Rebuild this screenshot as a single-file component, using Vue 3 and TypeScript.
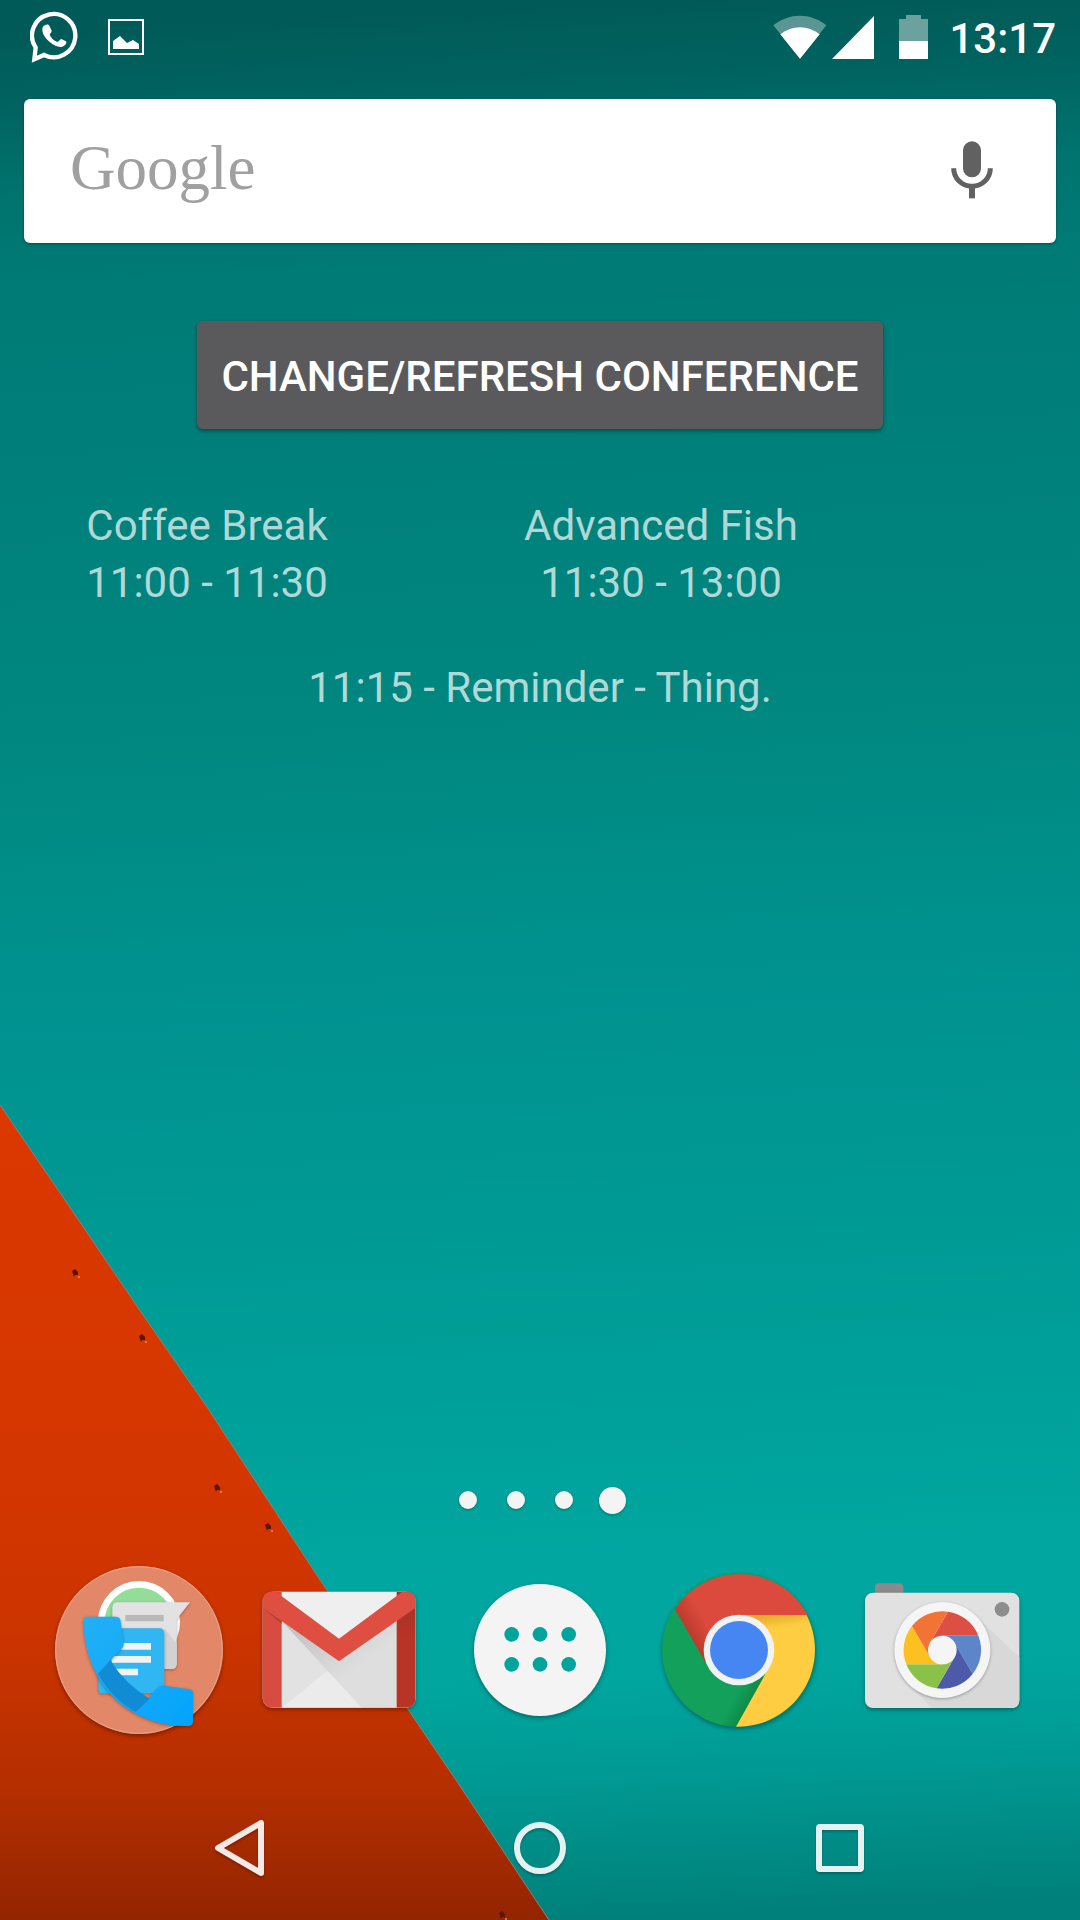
<script setup lang="ts">
interface Session {
  title: string
  time: string
}

const clock = '13:17'
const sessions: Session[] = [
  { title: 'Coffee Break', time: '11:00 - 11:30' },
  { title: 'Advanced Fish', time: '11:30 - 13:00' },
]
const reminder = '11:15 - Reminder - Thing.'
const pages = [1, 2, 3, 4]
const currentPage = 4
const rivets = [
  [75, 1273],
  [142, 1338],
  [217, 1488],
  [268, 1527],
  [502, 1915],
]
</script>

<template>
  <div class="home">
    <svg class="wallpaper" viewBox="0 0 1080 1920" preserveAspectRatio="none" aria-hidden="true">
      <defs>
        <linearGradient id="sea" gradientUnits="userSpaceOnUse" x1="500" y1="0" x2="580" y2="1920">
          <stop offset="0" stop-color="#005a57" />
          <stop offset="0.04" stop-color="#00625f" />
          <stop offset="0.09" stop-color="#00736e" />
          <stop offset="0.14" stop-color="#007b76" />
          <stop offset="0.24" stop-color="#00807b" />
          <stop offset="0.37" stop-color="#008780" />
          <stop offset="0.46" stop-color="#008f89" />
          <stop offset="0.5" stop-color="#00918f" />
          <stop offset="0.63" stop-color="#009994" />
          <stop offset="0.73" stop-color="#00a09a" />
          <stop offset="0.82" stop-color="#00a7a0" />
          <stop offset="0.88" stop-color="#00a59e" />
          <stop offset="0.93" stop-color="#009892" />
          <stop offset="1" stop-color="#00807a" />
        </linearGradient>
        <linearGradient id="rust" gradientUnits="userSpaceOnUse" x1="0" y1="1105" x2="0" y2="1920">
          <stop offset="0" stop-color="#dc3800" />
          <stop offset="0.45" stop-color="#d43600" />
          <stop offset="0.65" stop-color="#cc3400" />
          <stop offset="0.83" stop-color="#b62f00" />
          <stop offset="1" stop-color="#932500" />
        </linearGradient>
      </defs>
      <rect width="1080" height="1920" fill="url(#sea)" />
      <path d="M0 1105 67 1203 143 1315 207 1407 320 1580 456 1780 549 1920H0Z" fill="url(#rust)" />
      <path d="M0 1105 67 1203 143 1315 207 1407 320 1580 456 1780 549 1920" fill="none" stroke="#9c7a70" stroke-width="1" />
      <g v-for="[x, y] in rivets" :key="x">
        <path :d="`M${x - 3} ${y - 2}l3 -2 3 3 0 3-3 0-1 2-1-3z`" fill="#5a1600" />
        <circle :cx="x + 4" :cy="y + 4" r="1" fill="#ee8a60" />
      </g>
    </svg>

    <header class="status">
      <div class="notices">
        <svg width="48" height="52" viewBox="90 35 144 156" role="img" aria-label="WhatsApp">
          <path d="M107 145A65 65 0 1 1 132 167L103 180Z" fill="none" stroke="#fff" stroke-width="13" stroke-linejoin="miter" />
          <path d="M128 84c6-10 17-11 20-5l7 15c1 4-6 9-6 12 4 10 13 18 23 22 4 0 8-9 12-9l14 7c4 5-3 14-11 16-9 3-23-1-37-13-13-11-27-27-22-45Z" fill="#fff" />
        </svg>
        <svg width="36" height="36" viewBox="0 0 36 36" role="img" aria-label="Picture">
          <rect x="1" y="1" width="34" height="34" fill="none" stroke="#fff" stroke-width="2" />
          <path d="M5 30V22L12 17 19 24 25 21 31 25V30Z" fill="#fff" />
        </svg>
      </div>
      <div class="system">
        <svg width="54" height="44" viewBox="98 46 162 132" role="img" aria-label="Wi-Fi">
          <path d="M179 177 99 77C148 39 210 39 258 77Z" fill="#fff" fill-opacity=".35" />
          <path d="M179 177 120 104C156 76 202 76 238 104Z" fill="#fff" />
        </svg>
        <svg class="signal" width="42" height="44" viewBox="0 0 42 44" role="img" aria-label="Signal">
          <path d="M0 44 42 1V44Z" fill="#fff" />
        </svg>
        <svg class="battery" width="30" height="44" viewBox="0 0 30 44" role="img" aria-label="Battery">
          <path d="M0 4H7V0H22V4H29V26H0Z" fill="#fff" fill-opacity=".42" />
          <path d="M0 26H29V44H0Z" fill="#fff" />
        </svg>
        <time class="clock">{{ clock }}</time>
      </div>
    </header>

    <div class="search">
      <a class="brand" href="#">Google</a>
      <button class="mic" type="button" aria-label="Voice search">
        <svg width="42" height="58" viewBox="633 422 126 174" aria-hidden="true">
          <rect x="669" y="423" width="54" height="108" rx="27" fill="#616161" />
          <path d="M641 504a55 54 0 0 0 110 0" fill="none" stroke="#616161" stroke-width="15" />
          <path d="M687 560h18v34h-18z" fill="#616161" />
        </svg>
      </button>
    </div>

    <main class="widget">
      <button class="refresh" type="button">CHANGE/REFRESH CONFERENCE</button>
      <div class="sessions">
        <div v-for="s in sessions" :key="s.title">
          <div>{{ s.title }}</div>
          <div>{{ s.time }}</div>
        </div>
      </div>
      <div class="reminder">{{ reminder }}</div>
    </main>

    <div class="pages">
      <span v-for="p in pages" :key="p" class="page"><i :class="{ current: p === currentPage }"></i></span>
    </div>

    <nav class="dock">
      <button type="button" aria-label="Folder">
        <svg viewBox="30 30 600 600" aria-hidden="true">
          <defs>
            <linearGradient id="handset" x1="0" y1="0" x2="1" y2="1">
              <stop offset="0" stop-color="#22b0f6" />
              <stop offset="1" stop-color="#04a4fb" />
            </linearGradient>
          </defs>
          <circle class="lift" cx="327" cy="330" r="252" fill="#e28767" />
          <circle cx="327" cy="330" r="250" fill="none" stroke="#eba58c" stroke-width="3" />
          <circle cx="327" cy="246" r="113" fill="#92dd97" stroke="#fff" stroke-width="20" />
          <g class="soft">
            <path d="M263 187H480L440 238V371q0 16-16 16H263q-16 0-16-16V203q0-16 16-16Z" fill="#e2e2e2" />
          </g>
          <path d="M403 265 440 310V371q0 16-16 16H403Z" fill="#d2d2d2" />
          <path d="M286 225H401V244H286Z" fill="#b9b9b9" />
          <path class="soft" d="M225 265H387q16 0 16 16V444q0 16-16 16H215q-10 0-10-12V285q0-20 20-20Z" fill="#31b6f4" />
          <path d="M245 309H363V329H245ZM245 348H363V368H245ZM245 386H324V406H245Z" fill="#f1f3f4" />
          <path class="soft" d="M172 230H258q13 1 14 14l6 44 3 26q-2 9-9 15l-38 40q50 68 119 108l33-35q7-6 17-5l74 11q12 1 12 13V545q-1 13-14 13-120 3-215-76Q162 386 160 243q1-13 12-13Z" fill="url(#handset)" />
          <path d="M241 361q45 73 118 115L317 516Q242 472 204 401Z" fill="#108bd4" />
        </svg>
      </button>
      <button type="button" aria-label="Gmail">
        <svg viewBox="0 -30 600 600" aria-hidden="true">
          <defs>
            <clipPath id="mail"><rect x="68" y="95" width="459" height="348" rx="28" /></clipPath>
            <linearGradient id="fold" x1="0" y1="0" x2="1" y2="1">
              <stop offset="0" stop-color="#bdbdbd" />
              <stop offset=".6" stop-color="#dedede" />
            </linearGradient>
            <linearGradient id="side" x1="0" y1="0" x2="0" y2="1">
              <stop offset="0" stop-color="#9f3428" />
              <stop offset=".4" stop-color="#b83427" />
            </linearGradient>
          </defs>
          <rect class="lift" x="68" y="95" width="459" height="348" rx="28" fill="#e2e2e2" />
          <g clip-path="url(#mail)">
            <path d="M125 183 365 443H470V183L297 304Z" fill="url(#fold)" />
            <path d="M125 443 262 332 365 443Z" fill="#ebebeb" />
            <path d="M107 95H487L297 236Z" fill="#efefef" />
            <path d="M68 95H125V443H68Z" fill="#d84b41" />
            <path d="M470 95H527V443H470Z" fill="url(#side)" />
            <path d="M68 143 125 191V180Z" fill="#b63c34" />
            <path d="M68 95H107L297 236 487 95H527V143L297 304 68 143Z" fill="#de4e41" />
          </g>
        </svg>
      </button>
      <button type="button" aria-label="Apps">
        <svg viewBox="0 270 600 600" aria-hidden="true">
          <circle class="lift" cx="300" cy="570" r="198" fill="#f4f4f4" />
          <g fill="#00a49c">
            <circle cx="215" cy="523" r="22" /><circle cx="300" cy="523" r="22" /><circle cx="386" cy="523" r="22" />
            <circle cx="215" cy="613" r="22" /><circle cx="300" cy="613" r="22" /><circle cx="386" cy="613" r="22" />
          </g>
        </svg>
      </button>
      <button type="button" aria-label="Chrome">
        <svg viewBox="0 0 600 600" aria-hidden="true">
          <defs>
            <linearGradient id="redShade" gradientUnits="userSpaceOnUse" x1="150" y1="260" x2="205" y2="228">
              <stop offset="0" stop-color="#bb3a2c" />
              <stop offset="1" stop-color="#dc4a3d" />
            </linearGradient>
            <linearGradient id="yellowShade" gradientUnits="userSpaceOnUse" x1="400" y1="195" x2="406" y2="235">
              <stop offset="0" stop-color="#e5ad2c" />
              <stop offset="1" stop-color="#ffcd41" />
            </linearGradient>
            <linearGradient id="greenShade" gradientUnits="userSpaceOnUse" x1="345" y1="440" x2="300" y2="415">
              <stop offset="0" stop-color="#0d8746" />
              <stop offset="1" stop-color="#12a05b" />
            </linearGradient>
          </defs>
          <circle class="lift" cx="297" cy="300" r="231" fill="url(#greenShade)" />
          <path d="M500 195H297L300 300 376 372 288 530A231 231 0 0 0 500 195Z" fill="url(#yellowShade)" />
          <path d="M105 178A231 231 0 0 1 503 195H297L300 300 195 335Z" fill="url(#redShade)" />
          <circle cx="297" cy="300" r="106" fill="#f2f2f2" />
          <circle cx="297" cy="300" r="87" fill="#4586f3" />
        </svg>
      </button>
      <button type="button" aria-label="Camera">
        <svg viewBox="-30 -30 600 600" aria-hidden="true">
          <path d="M75 110V82q0-12 12-12H148q12 0 12 12V110Z" fill="#8b8b8b" />
          <rect class="lift" x="45" y="98" width="463" height="346" rx="24" fill="#e1e1e1" />
          <path d="M380 170 508 292V420q0 24-24 24H245L170 365Z" fill="#d8d8d8" />
          <circle cx="456" cy="148" r="22" fill="#8d8d8d" />
          <circle class="soft" cx="277" cy="270" r="144" fill="#f5f5f5" />
          <path d="M294 155A116 116 0 0 1 385 227H277V270L240 248Z" fill="#de4f43" />
          <path d="M385 227A116 116 0 0 1 368 342L314 249 277 270V227Z" fill="#5c86c9" />
          <path d="M368 342A116 116 0 0 1 260 385L314 291 277 270 314 249Z" fill="#4d5aa9" />
          <path d="M260 385A116 116 0 0 1 169 313H277V270L314 291Z" fill="#8ac249" />
          <path d="M169 313A116 116 0 0 1 186 198L240 291 277 270V313Z" fill="#fcc021" />
          <path d="M186 198A116 116 0 0 1 294 155L240 248 277 270 240 291Z" fill="#f27336" />
          <circle cx="277" cy="270" r="43" fill="#f5f5f5" />
        </svg>
      </button>
    </nav>

    <nav class="keys">
      <button type="button" aria-label="Back">
        <svg viewBox="0 0 60 60" aria-hidden="true"><path d="M8 30 51 5V55Z" /></svg>
      </button>
      <button type="button" aria-label="Home">
        <svg viewBox="0 0 60 60" aria-hidden="true"><circle cx="30" cy="30" r="23" /></svg>
      </button>
      <button type="button" aria-label="Recent apps">
        <svg viewBox="0 0 60 60" aria-hidden="true"><rect x="9" y="9" width="42" height="42" rx="1" /></svg>
      </button>
    </nav>
  </div>
</template>

<style>
body {
  background: #00807a;
}
</style>

<style scoped>
.home {
  position: relative;
  isolation: isolate;
  display: flex;
  flex-direction: column;
  min-height: 100vh;
  overflow: hidden;
  color: #fff;
  font-family: Roboto, "Liberation Sans", sans-serif;
}
.wallpaper {
  position: absolute;
  inset: 0;
  z-index: -1;
  width: 100%;
  height: 100%;
}
button {
  padding: 0;
  border: 0;
  background: none;
  color: inherit;
  font: inherit;
}
svg {
  display: block;
}
.status {
  display: flex;
  align-items: center;
  justify-content: space-between;
  height: 74px;
  padding: 0 24px 0 30px;
}
.notices,
.system {
  display: flex;
  align-items: center;
}
.notices {
  gap: 30px;
}
.signal {
  margin-left: 5px;
}
.battery {
  margin: 0 20px 0 25px;
}
.clock {
  padding-top: 4px;
  font-size: 42px;
  font-weight: 500;
  line-height: 48px;
}
.search {
  display: flex;
  align-items: center;
  justify-content: space-between;
  height: 144px;
  margin: 25px 24px 0;
  border-radius: 6px;
  background: #fff;
  box-shadow: 0 1px 3px rgba(0, 0, 0, 0.35);
}
.brand {
  margin-left: 46px;
  padding-bottom: 6px;
  color: #a0a0a0;
  font-family: "Liberation Serif", serif;
  font-size: 63px;
  line-height: 72px;
  text-decoration: none;
}
.mic {
  margin-right: 63px;
  padding-bottom: 2px;
}
.widget {
  display: flex;
  flex-direction: column;
  align-items: center;
  margin-top: 78px;
  color: rgba(255, 255, 255, 0.7);
  font-size: 42px;
  line-height: 57px;
  text-align: center;
}
.refresh {
  height: 108px;
  padding: 2px 24px 0;
  border-radius: 6px;
  background: #5a5a5c;
  box-shadow: 0 2px 4px rgba(0, 0, 0, 0.4);
  color: #fff;
  font-weight: 500;
}
.sessions {
  display: grid;
  grid-template-columns: 207fr 247fr 86fr;
  align-self: stretch;
  margin-top: 68px;
}
.reminder {
  margin-top: 48px;
}
.pages {
  display: flex;
  justify-content: center;
  height: 48px;
  margin-top: auto;
}
.page {
  display: flex;
  align-items: center;
  justify-content: center;
  width: 48px;
}
.page i {
  width: 18px;
  height: 18px;
  border-radius: 50%;
  background: #f4f4f4;
  box-shadow: 0 1px 3px rgba(0, 0, 0, 0.3);
}
.page .current {
  width: 27px;
  height: 27px;
}
.dock {
  display: flex;
  margin-top: 26px;
  padding: 0 40px;
}
.dock button {
  display: flex;
  flex: 1;
  justify-content: center;
}
.dock svg {
  width: 200px;
  height: 200px;
}
.lift {
  filter: drop-shadow(0 6px 6px rgba(0, 0, 0, 0.35));
}
.soft {
  filter: drop-shadow(0 3px 4px rgba(0, 0, 0, 0.3));
}
.keys {
  display: flex;
  height: 144px;
  margin-top: 26px;
  padding: 0 90px;
}
.keys button {
  display: flex;
  flex: 1;
  align-items: center;
  justify-content: center;
}
.keys svg {
  width: 60px;
  height: 60px;
  fill: none;
  stroke: #fff;
  stroke-opacity: 0.9;
  stroke-width: 6px;
  stroke-linejoin: round;
  filter: drop-shadow(0 2px 1px rgba(0, 0, 0, 0.25));
}
</style>
